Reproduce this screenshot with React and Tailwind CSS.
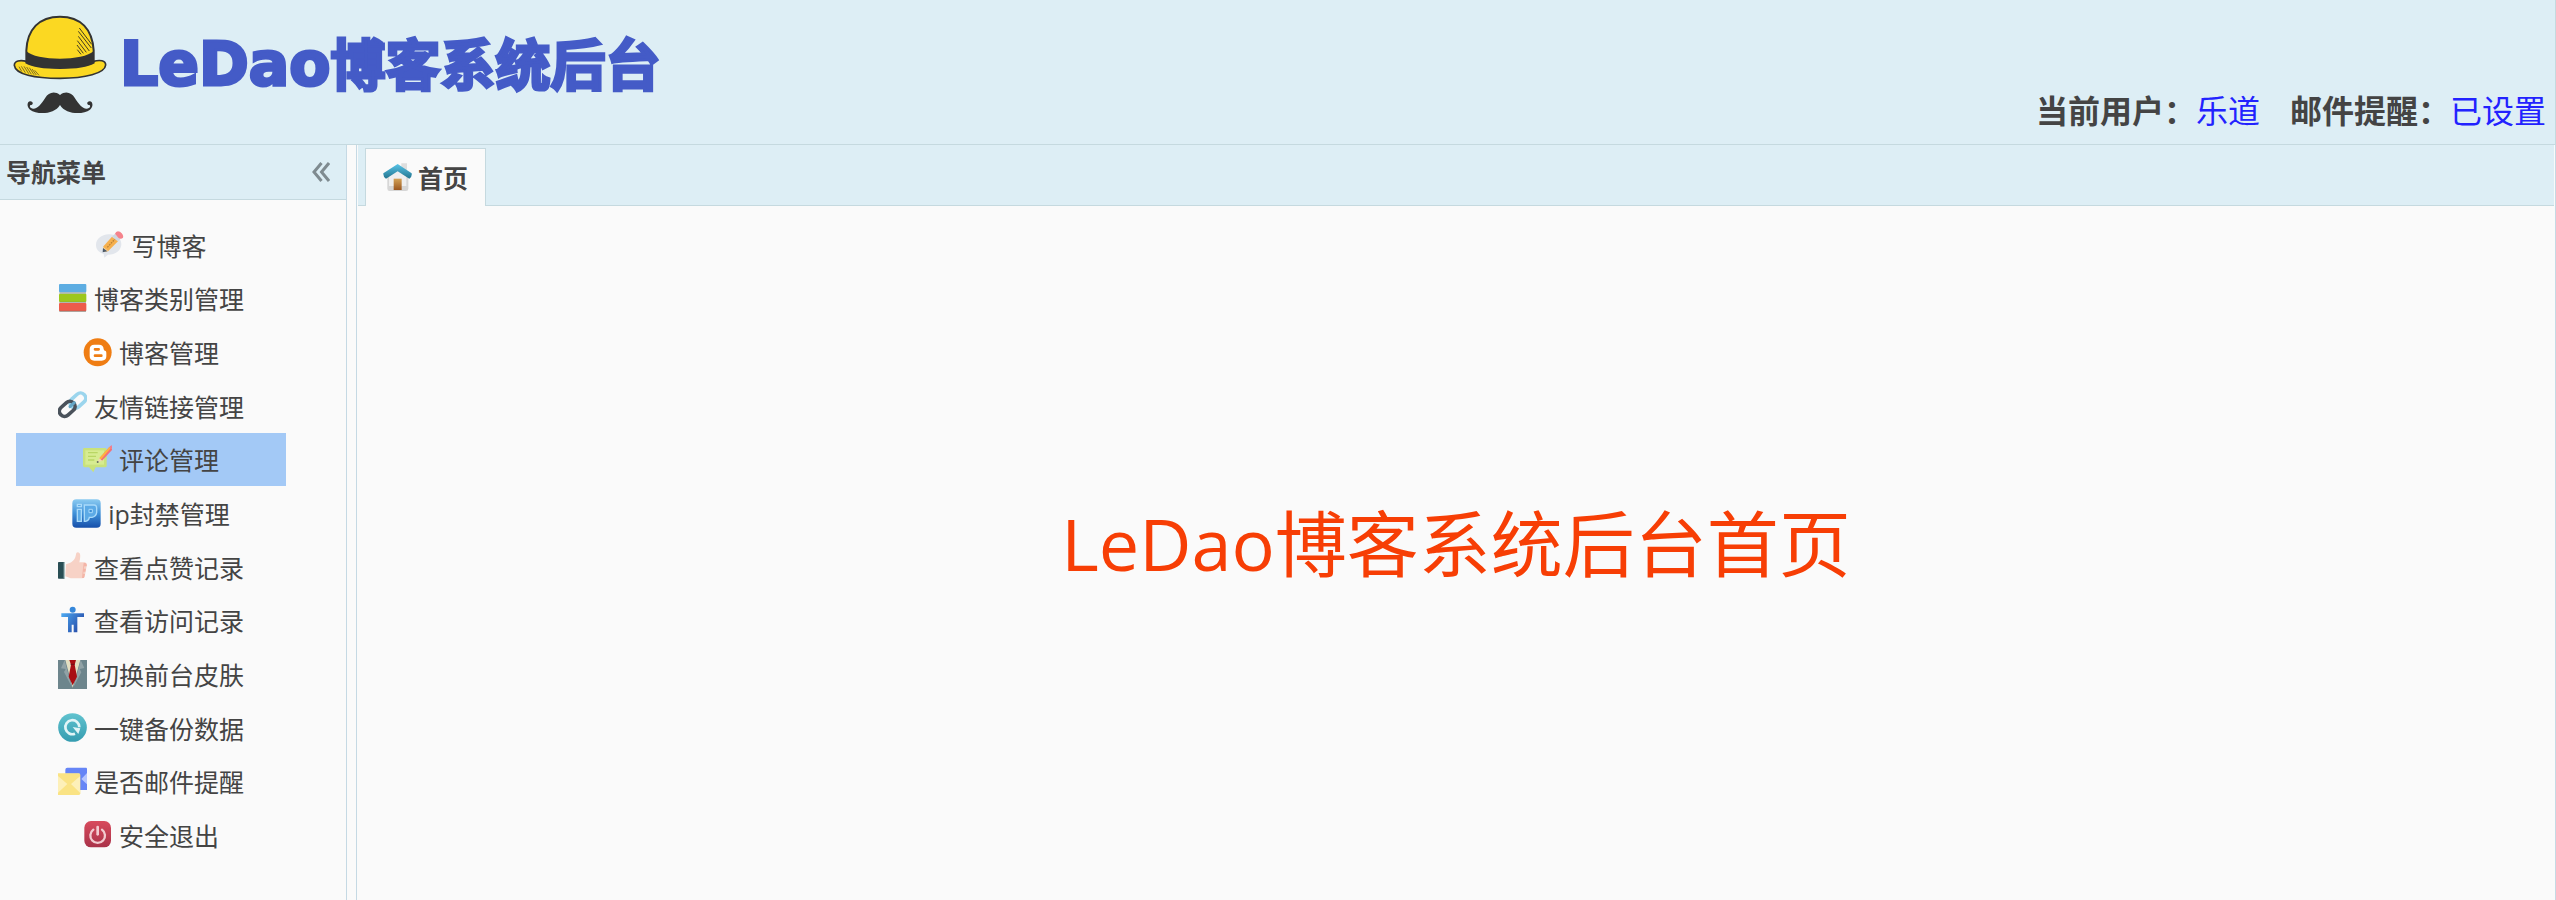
import React from "react";

function Icon({ children }) {
  return (
    <svg viewBox="0 0 87 87" className="size-[29px] shrink-0" aria-hidden="true">
      {children}
    </svg>
  );
}

const WriteIcon = () => (
  <Icon>
    <path d="M41 13C63 12 79 25 79 42C79 61 62 74 39 74L28 83L26 72C11 67 3 58 3 45C3 27 19 14 41 13Z" fill="#e2e6ec" />
    <path d="M24 50L51 20L69 34L39 64L24 65Z" fill="#f6b04e" />
    <path d="M37 52L60 27" stroke="#b98236" strokeWidth="4" strokeDasharray="5 3" />
    <path d="M51 20L60 11L77 26L69 34Z" fill="#cfd8e0" />
    <path d="M60 11Q64 0 75 5Q87 14 84 23Q78 29 70 23Z" fill="#f5838c" />
    <path d="M24 50L39 62L24 66Z" fill="#f7d7a2" />
    <path d="M24 54L37 64L23 67Z" fill="#4b5968" />
  </Icon>
);

const CategoryIcon = () => (
  <Icon>
    <rect x="3" y="0" width="82" height="25" rx="3" fill="#5dade2" />
    <rect x="3" y="29" width="82" height="25" rx="3" fill="#9cc71d" />
    <rect x="3" y="57" width="82" height="25" rx="3" fill="#ed5b4b" />
    <path d="M4 27H84M4 55H84M4 82H84" stroke="#65736a" strokeOpacity=".5" strokeWidth="4" />
  </Icon>
);

const BlogIcon = () => (
  <Icon>
    <circle cx="44" cy="43" r="42" fill="#ef7d13" />
    <path
      d="M34 20H48Q62 20 62 34Q63 39 68 39Q70 40 70 45V55Q70 68 56 68H34Q20 68 20 54V34Q20 20 34 20Z"
      fill="#fff"
    />
    <path d="M36 34H47M36 53H55" stroke="#ef7d13" strokeWidth="8" strokeLinecap="round" />
  </Icon>
);

const LinkIcon = () => (
  <Icon>
    <rect x="34" y="13" width="52" height="31" rx="15" transform="rotate(-42 60 29)" fill="none" stroke="#9bd5ed" strokeWidth="11" />
    <rect x="2" y="38" width="52" height="31" rx="15" transform="rotate(-42 28 54)" fill="none" stroke="#4a525b" strokeWidth="11" />
    <path d="M36 47L49 35" stroke="#65a7c7" strokeWidth="9" strokeLinecap="round" />
  </Icon>
);

const CommentIcon = () => (
  <Icon>
    <path d="M3 9H67Q71 9 71 14V62Q71 67 66 67H38L31 82L18 67H5Q0 67 0 61V14Q0 9 3 9Z" fill="#c9e27b" />
    <path d="M7 16H63V59H7Z" fill="#d7ec91" />
    <path d="M15 23H44M15 34H39M15 45H34" stroke="#b9d665" strokeWidth="4" />
    <path d="M49 40L79 6L88 14L57 47Z" fill="#f46f79" />
    <path d="M49 40L79 6L83 10L53 44Z" fill="#ffb53d" />
    <path d="M49 40L57 47L42 53Z" fill="#eed9b0" />
    <circle cx="44" cy="51" r="3" fill="#66705d" />
    <path d="M79 6L86 0L88 14Z" fill="#f77888" />
  </Icon>
);

const IpIcon = () => (
  <Icon>
    <defs>
      <linearGradient id="ip-fill" x2="0" y2="1">
        <stop stopColor="#8ccbf1" />
        <stop offset=".5" stopColor="#3f90d8" />
        <stop offset="1" stopColor="#164faa" />
      </linearGradient>
    </defs>
    <rect x="1" y="1" width="85" height="85" rx="12" fill="url(#ip-fill)" />
    <path
      d="M16 31H28V67H16ZM16 16H28V23H16ZM37 18H66Q74 18 74 27V41Q72 53 60 55H52Q51 65 40 67H37Z"
      fill="#5caae6"
      stroke="#a9dafa"
      strokeWidth="4"
    />
    <path d="M51 31H61V41H51Z" fill="#3b8fd6" stroke="#a9dafa" strokeWidth="3" />
  </Icon>
);

const LikeIcon = () => (
  <Icon>
    <path d="M24 37C36 34 47 29 52 16L55 3Q59-2 65 4Q69 10 64 31H80Q87 32 86 42L80 74Q78 79 72 79H38L22 73Z" fill="#f7d2c6" />
    <path d="M77 33H82Q88 34 86 43H79L77 50H84L82 59H76V66H81L78 78H72Q74 55 77 33Z" fill="#f4b5a7" />
    <rect x="0" y="30" width="20" height="50" rx="2" fill="#294e54" />
    <path d="M19 31V79" stroke="#a7bfc0" strokeWidth="4" />
  </Icon>
);

const VisitIcon = () => (
  <Icon>
    <defs>
      <linearGradient id="person-fill" x1=".1" x2="1" y2=".5">
        <stop stopColor="#4aa4ed" />
        <stop offset="1" stopColor="#284fab" />
      </linearGradient>
    </defs>
    <circle cx="44" cy="11" r="9" fill="#3587da" />
    <path d="M10 22H78V33H58V79H47V56H41V79H30V33H10Z" fill="url(#person-fill)" />
  </Icon>
);

const SkinIcon = () => (
  <Icon>
    <path d="M0 0H87V87H0Z" fill="#6d858c" />
    <path d="M22 0H67L44 83Z" fill="#e3dfc1" />
    <path d="M20 0L9 25L23 27L18 36L42 82L27 28Z" fill="#91a2a6" />
    <path d="M68 0L79 24L65 27L70 37L46 82L61 28Z" fill="#91a2a6" />
    <path d="M34 0H54L50 14L57 50L44 76L32 50L39 14Z" fill="#a90d13" />
    <path d="M38 13H50" stroke="#6f1018" strokeWidth="3" />
  </Icon>
);

const BackupIcon = () => (
  <Icon>
    <defs>
      <linearGradient id="backup-fill" x2="0" y2="1">
        <stop stopColor="#61c3cf" />
        <stop offset="1" stopColor="#359cb0" />
      </linearGradient>
    </defs>
    <circle cx="43.5" cy="43.5" r="43" fill="url(#backup-fill)" />
    <path d="M51 62A21 21 0 1 1 64 43" fill="none" stroke="#e2f5f7" strokeWidth="8" />
    <path d="M44 42L67 46L61 63Z" fill="#e2f5f7" />
  </Icon>
);

const MailIcon = () => (
  <Icon>
    <path d="M28 2H84Q87 2 87 6V69H65V20H22V8Q22 2 28 2Z" fill="#6685f6" />
    <path d="M87 18L70 36L87 52Z" fill="#b6c6ff" />
    <path d="M0 19H62Q67 19 67 24V79Q67 84 62 84H0Z" fill="#fae384" />
    <path d="M0 27L28 51L0 77ZM66 28L39 51L66 77Z" fill="#fdf0b9" />
  </Icon>
);

const ExitIcon = () => (
  <Icon>
    <defs>
      <linearGradient id="exit-fill" x2="0" y2="1">
        <stop stopColor="#d84b5d" />
        <stop offset="1" stopColor="#a93249" />
      </linearGradient>
    </defs>
    <rect x="4" y="0" width="80" height="79" rx="20" fill="url(#exit-fill)" />
    <path d="M31 26A22 22 0 1 0 57 26" fill="none" stroke="#f2cbd0" strokeWidth="7" strokeLinecap="round" />
    <path d="M44 18V40" stroke="#f2cbd0" strokeWidth="8" strokeLinecap="round" />
  </Icon>
);

const HomeIcon = () => (
  <Icon>
    <defs>
      <linearGradient id="roof-fill" x2="0" y2="1">
        <stop stopColor="#58c4e8" />
        <stop offset="1" stopColor="#23758f" />
      </linearGradient>
      <linearGradient id="door-fill" x2="0" y2="1">
        <stop stopColor="#d3a256" />
        <stop offset="1" stopColor="#9b561f" />
      </linearGradient>
    </defs>
    <path d="M55 1H72V28L55 18Z" fill="#dedede" />
    <path d="M13 38L44 15L76 38V77Q76 84 69 84H20Q13 84 13 77Z" fill="#d6d6d6" />
    <path d="M18 39L44 20L70 38V69H18Z" fill="#efefef" />
    <path d="M44 3L86 31Q88 40 79 47L44 25L9 47Q0 42 1 31Z" fill="url(#roof-fill)" />
    <path d="M32 47H56V81H32Z" fill="url(#door-fill)" />
  </Icon>
);

function HatLogo() {
  return (
    <svg viewBox="36 42 288 300" className="h-[100px] w-24 shrink-0" aria-hidden="true">
      <path
        d="M80 184C60 179 43 182 43 196C46 223 104 235 180 235C256 235 315 220 317 195C317 181 300 179 280 184Z"
        fill="#fbd822"
        stroke="#333"
        strokeWidth="5"
      />
      <path d="M79 188V151C82 88 117 50 180 50C243 50 277 88 281 151V188C246 209 114 209 79 188Z" fill="#fbd822" stroke="#333" strokeWidth="6" />
      <path d="M79 153C106 183 251 184 281 153V188C246 210 114 210 79 188Z" fill="#333" />
      <path
        d="M238 84L275 133M235 94L274 144M235 109L268 153M232 122L259 157M231 135L250 160M232 149L243 163"
        stroke="#453d20"
        strokeWidth="3"
      />
      <path
        d="M57 200L65 214M64 199L76 218M72 199L86 221M80 201L94 223M88 203L102 224M96 207L109 225M104 211L117 226"
        stroke="#453d20"
        strokeWidth="2"
      />
      <path
        d="M180 285C162 271 145 279 136 293C124 311 113 327 99 326C88 325 87 315 94 315C101 313 99 304 91 304C80 305 80 321 90 329C111 345 163 344 180 315C197 344 249 345 270 329C280 321 280 305 269 304C261 304 259 313 266 315C273 315 272 325 261 326C247 327 236 311 224 293C215 279 198 271 180 285Z"
        fill="#333"
      />
    </svg>
  );
}

const MENU = [
  { label: "写博客", icon: WriteIcon },
  { label: "博客类别管理", icon: CategoryIcon },
  { label: "博客管理", icon: BlogIcon },
  { label: "友情链接管理", icon: LinkIcon },
  { label: "评论管理", icon: CommentIcon, active: true },
  { label: "ip封禁管理", icon: IpIcon },
  { label: "查看点赞记录", icon: LikeIcon },
  { label: "查看访问记录", icon: VisitIcon },
  { label: "切换前台皮肤", icon: SkinIcon },
  { label: "一键备份数据", icon: BackupIcon },
  { label: "是否邮件提醒", icon: MailIcon },
  { label: "安全退出", icon: ExitIcon },
];

function Header() {
  return (
    <header className="flex h-[145px] shrink-0 justify-between border-r border-b border-[#c5d9df] bg-[#ddeef5]">
      <h1 className="flex h-32 items-center gap-3 pl-3 leading-none font-bold whitespace-nowrap text-[#445bc7]">
        <HatLogo />
        <span className="flex items-baseline [-webkit-text-stroke:3px_#445bc7]">
          <span className="font-['DejaVu_Sans',sans-serif] text-[60px]">LeDao</span>
          <span className="text-[55px]">博客系统后台</span>
        </span>
      </h1>
      <div className="flex items-end gap-[30px] pr-[9px] pb-[13px] text-[32px] leading-10 whitespace-nowrap">
        <p>
          <b>当前用户：</b>
          <a href="#user" className="text-[#2222ff]">乐道</a>
        </p>
        <p>
          <b>邮件提醒：</b>
          <a href="#mail" className="text-[#2222ff]">已设置</a>
        </p>
      </div>
    </header>
  );
}

function Sidebar() {
  return (
    <aside className="w-[347px] shrink-0 border-r border-[#c5d9e4]">
      <div className="flex h-[55px] items-center justify-between border-b border-[#c5d9df] bg-[#ddeef5] pr-4 pl-[6px]">
        <h2 className="text-[25px] leading-8 font-bold">导航菜单</h2>
        <button type="button" aria-label="折叠导航菜单">
          <svg viewBox="0 0 18 20" className="h-5 w-[18px]" fill="none" stroke="#7f8b90" strokeWidth="3" aria-hidden="true">
            <path d="M9.500 1L2 10L9.500 19M17 1L9.500 10L17 19" />
          </svg>
        </button>
      </div>
      <nav className="mt-[18px] ml-4 grid h-[644px] w-[270px] grid-rows-12">
        {MENU.map(({ label, icon: ItemIcon, active }) => (
          <a
            key={label}
            href="#menu"
            className={
              active
                ? "flex items-center justify-center gap-[7px] bg-[#a3c9f6] text-[25px] leading-8"
                : "flex items-center justify-center gap-[7px] text-[25px] leading-8"
            }
          >
            <ItemIcon />
            <span className="pt-0.5">{label}</span>
          </a>
        ))}
      </nav>
    </aside>
  );
}

function Workspace() {
  return (
    <main className="ml-[9px] flex min-w-0 flex-1 flex-col border-x border-[#c5d9e4] px-px">
      <div role="tablist" className="flex h-[61px] items-end border-b border-[#c5d9df] bg-[#ddeef5] pl-[7px]">
        <button
          type="button"
          role="tab"
          aria-selected="true"
          className="-mb-px flex h-[58px] items-center gap-[6px] border border-b-0 border-[#c5d9df] bg-[#fafafa] px-[17px] text-[25px] leading-8 font-bold"
        >
          <HomeIcon />
          <span>首页</span>
        </button>
      </div>
      <section className="flex flex-1 items-center justify-center pb-5">
        <p className="text-[72px] leading-none text-[#f73e05]">LeDao博客系统后台首页</p>
      </section>
    </main>
  );
}

export default function App() {
  return (
    <div
      lang="zh-CN"
      className="flex min-h-screen flex-col bg-[#fafafa] font-['Open_Sans','Noto_Sans_CJK_SC',sans-serif] text-[#444]"
    >
      <Header />
      <div className="flex flex-1">
        <Sidebar />
        <Workspace />
      </div>
    </div>
  );
}
